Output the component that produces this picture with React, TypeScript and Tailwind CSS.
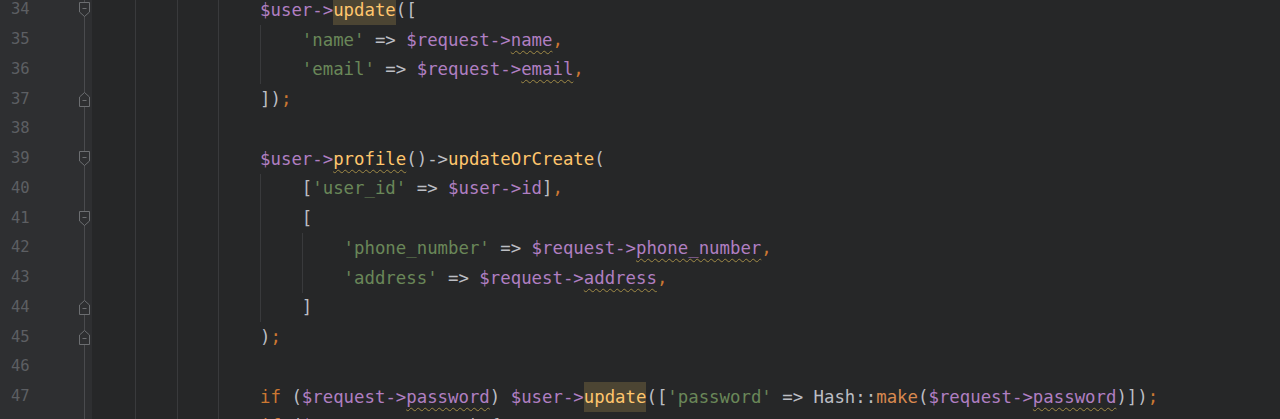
import React from 'react';

type Tok = { t: string; c: string; wave?: boolean; hl?: boolean };
type Line = { n: number; indent: number; guides: number[]; fold?: 'open' | 'close'; toks: Tok[] };

const P = 'text-[#b07fc2]';
const G = 'text-[#6a8759]';
const W = 'text-[#bcbec4]';
const O = 'text-[#cc7832]';
const Y = 'text-[#ffc66d]';
const M = 'text-[#d9894f]';

const outer = [4, 8, 12];

const lines: Line[] = [
    {
        n: 34, indent: 16, guides: outer, fold: 'open',
        toks: [{ t: '$user->', c: P }, { t: 'update', c: Y, hl: true }, { t: '([', c: W }],
    },
    {
        n: 35, indent: 20, guides: [...outer, 16],
        toks: [{ t: "'name'", c: G }, { t: ' => ', c: W }, { t: '$request->', c: P }, { t: 'name', c: P, wave: true }, { t: ',', c: O }],
    },
    {
        n: 36, indent: 20, guides: [...outer, 16],
        toks: [{ t: "'email'", c: G }, { t: ' => ', c: W }, { t: '$request->', c: P }, { t: 'email', c: P, wave: true }, { t: ',', c: O }],
    },
    { n: 37, indent: 16, guides: outer, fold: 'close', toks: [{ t: '])', c: W }, { t: ';', c: O }] },
    { n: 38, indent: 16, guides: outer, toks: [] },
    {
        n: 39, indent: 16, guides: outer, fold: 'open',
        toks: [{ t: '$user->', c: P }, { t: 'profile', c: Y, wave: true }, { t: '()->', c: W }, { t: 'updateOrCreate', c: Y }, { t: '(', c: W }],
    },
    {
        n: 40, indent: 20, guides: [...outer, 16],
        toks: [{ t: '[', c: W }, { t: "'user_id'", c: G }, { t: ' => ', c: W }, { t: '$user->id', c: P }, { t: ']', c: W }, { t: ',', c: O }],
    },
    { n: 41, indent: 20, guides: [...outer, 16], fold: 'open', toks: [{ t: '[', c: W }] },
    {
        n: 42, indent: 24, guides: [...outer, 16, 20],
        toks: [{ t: "'phone_number'", c: G }, { t: ' => ', c: W }, { t: '$request->', c: P }, { t: 'phone_number', c: P, wave: true }, { t: ',', c: O }],
    },
    {
        n: 43, indent: 24, guides: [...outer, 16, 20],
        toks: [{ t: "'address'", c: G }, { t: ' => ', c: W }, { t: '$request->', c: P }, { t: 'address', c: P, wave: true }, { t: ',', c: O }],
    },
    { n: 44, indent: 20, guides: [...outer, 16], fold: 'close', toks: [{ t: ']', c: W }] },
    { n: 45, indent: 16, guides: outer, fold: 'close', toks: [{ t: ')', c: W }, { t: ';', c: O }] },
    { n: 46, indent: 16, guides: outer, toks: [] },
    {
        n: 47, indent: 16, guides: outer,
        toks: [
            { t: 'if', c: O }, { t: ' (', c: W }, { t: '$request->', c: P }, { t: 'password', c: P, wave: true },
            { t: ') ', c: W }, { t: '$user->', c: P }, { t: 'update', c: Y, hl: true }, { t: '([', c: W },
            { t: "'password'", c: G }, { t: ' => ', c: W }, { t: 'Hash::', c: W }, { t: 'make', c: M },
            { t: '(', c: W }, { t: '$request->', c: P }, { t: 'password', c: P, wave: true }, { t: ')])', c: W }, { t: ';', c: O },
        ],
    },
    {
        n: 48, indent: 16, guides: outer,
        toks: [{ t: 'if', c: O }, { t: ' (', c: W }, { t: '$request->avatar', c: P }, { t: ') {', c: W }],
    },
];

function FoldMark({ kind }: { kind: 'open' | 'close' }) {
    return (
        <svg width="13" height="17" viewBox="0 0 13 17" className="relative z-10">
            {kind === 'open' ? (
                <path d="M1.5 1.5H11.5V11L6.5 15.5L1.5 11Z" fill="#2e2f31" stroke="#6c6e71" strokeWidth="1" />
            ) : (
                <path d="M6.5 1.5L11.5 6V15.5H1.5V6Z" fill="#2e2f31" stroke="#6c6e71" strokeWidth="1" />
            )}
            <path d={kind === 'open' ? 'M4.5 7.5H8.5' : 'M4.5 9.5H8.5'} stroke="#6c6e71" strokeWidth="1" />
        </svg>
    );
}

function CodeLine({ line }: { line: Line }) {
    const cells = [];
    for (let col = 0; col < line.indent; col += 4) {
        const g = line.guides.includes(col);
        cells.push(
            <span
                key={col}
                className={`inline-block w-[4ch] h-full shrink-0 ${g ? 'shadow-[inset_1px_0_0_#393a3c]' : ''}`}
            />,
        );
    }
    return (
        <div className="flex h-[29.75px] shrink-0 items-stretch whitespace-pre">
            {cells}
            <span className="flex items-stretch">
                {line.toks.map((tk, i) => (
                    <span
                        key={i}
                        className={`${tk.c} flex items-center ${tk.hl ? 'bg-[#4c4533]' : ''}`}
                    >
                        <span
                            className={tk.wave ? 'underline decoration-wavy decoration-[#a08a46] decoration-1 underline-offset-[4px]' : ''}
                        >
                            {tk.t}
                        </span>
                    </span>
                ))}
            </span>
        </div>
    );
}

export default function App() {
    return (
        <div className="w-[1280px] h-[419px] overflow-hidden flex items-start bg-[#262728]">
            <div className="w-[92px] h-[440px] shrink-0 bg-[#2e2f31] flex flex-col -mt-[5px] font-['DejaVu_Sans_Mono',monospace]">
                {lines.map((l) => (
                    <div key={l.n} className="flex h-[29.75px] shrink-0 items-stretch">
                        <span className="w-[78px] pl-[11px] flex items-center text-[15.5px] text-[#5d5f63]">{l.n}</span>
                        <span className="w-[13px] relative flex items-center justify-center">
                            <span className="absolute inset-y-0 left-[6px] w-px bg-[#4a4b4e]" />
                            {l.fold && <FoldMark kind={l.fold} />}
                        </span>
                    </div>
                ))}
            </div>
            <div className="flex-1 flex flex-col -mt-[5px] pl-px text-[17.35px] font-['DejaVu_Sans_Mono',monospace]">
                {lines.map((l) => (
                    <CodeLine key={l.n} line={l} />
                ))}
            </div>
        </div>
    );
}
